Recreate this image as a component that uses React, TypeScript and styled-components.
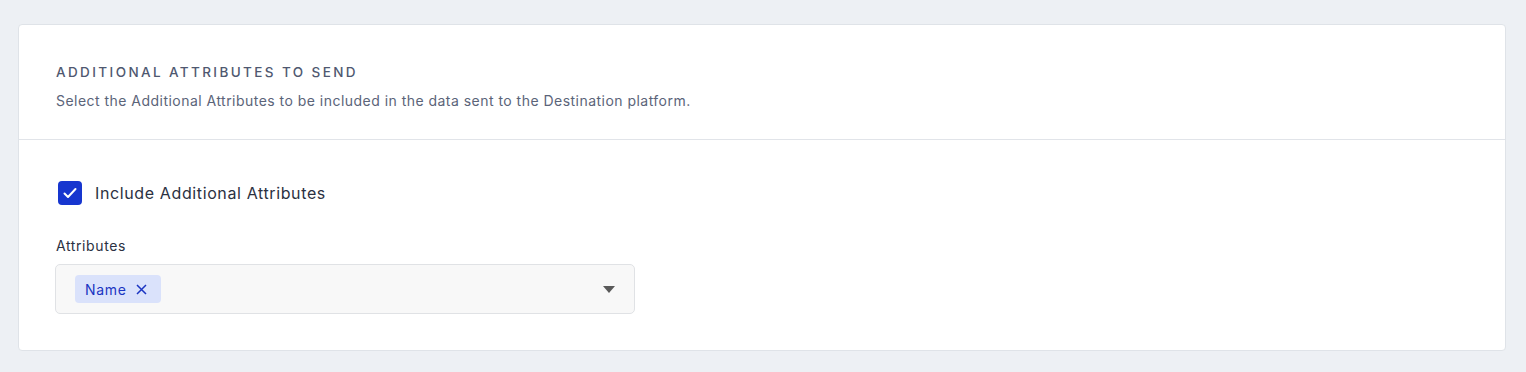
import React, { useState } from "react";
import styled, { createGlobalStyle } from "styled-components";

const GlobalStyle = createGlobalStyle`
  body {
    margin: 0;
    background: #edf0f4;
    font-family: Inter, "Noto Sans", sans-serif;
  }
`;

const Page = styled.div`
  padding: 24px 20px 21px 18px;
`;

const Card = styled.section`
  background: #ffffff;
  border: 1px solid #dfe3e8;
  border-radius: 4px;
`;

const Header = styled.div`
  padding: 37px 37px 28px;
  border-bottom: 1px solid #e1e4e9;
  display: flex;
  flex-direction: column;
  gap: 9px;
`;

const Title = styled.h3`
  margin: 0;
  font-size: 13.5px;
  line-height: 20px;
  font-weight: 500;
  letter-spacing: 2.4px;
  text-transform: uppercase;
  color: #4f5870;
`;

const Subtitle = styled.p`
  margin: 0;
  font-size: 14px;
  line-height: 20px;
  letter-spacing: 0.47px;
  color: #5b6479;
`;

const Body = styled.div`
  padding: 41px 37px 36px;
  display: flex;
  flex-direction: column;
`;

const CheckRow = styled.label`
  display: flex;
  align-items: center;
  gap: 13px;
  margin-left: 2px;
  cursor: pointer;
`;

const Box = styled.span<{ $checked: boolean }>`
  width: 24px;
  height: 24px;
  border-radius: 4px;
  background: ${(p) => (p.$checked ? "#1736cf" : "#fff")};
  border: ${(p) => (p.$checked ? "none" : "1px solid #9aa1ad")};
  display: flex;
  align-items: center;
  justify-content: center;
  box-sizing: border-box;
`;

const CheckText = styled.span`
  font-size: 16px;
  letter-spacing: 0.62px;
  color: #2b3142;
`;

const FieldLabel = styled.div`
  margin-top: 31px;
  margin-bottom: 8px;
  font-size: 14px;
  line-height: 20px;
  letter-spacing: 0.6px;
  color: #2b3142;
`;

const Select = styled.div`
  width: 580px;
  height: 50px;
  box-sizing: border-box;
  margin-left: -1px;
  border: 1px solid #e0e2e5;
  border-radius: 5px;
  background: #f8f8f8;
  display: flex;
  align-items: center;
  padding: 0 18px 0 19px;
`;

const Chips = styled.div`
  flex: 1;
  display: flex;
  gap: 6px;
`;

const Chip = styled.span`
  display: inline-flex;
  align-items: center;
  gap: 9px;
  height: 28px;
  padding: 0 14px 0 10px;
  border-radius: 4px;
  background: #dae2fb;
  color: #1b35c2;
  font-size: 14px;
  letter-spacing: 0.7px;
`;

const Remove = styled.button`
  border: none;
  background: none;
  padding: 0;
  display: flex;
  cursor: pointer;
`;

const Caret = styled.span`
  width: 0;
  height: 0;
  border-left: 6px solid transparent;
  border-right: 6px solid transparent;
  border-top: 7px solid #5a5a5a;
  margin-right: 1px;
`;

export default function App() {
  const [checked, setChecked] = useState(true);
  return (
    <Page>
      <GlobalStyle />
      <Card>
        <Header>
          <Title>Additional Attributes to Send</Title>
          <Subtitle>
            Select the Additional Attributes to be included in the data sent to the Destination platform.
          </Subtitle>
        </Header>
        <Body>
          <CheckRow onClick={() => setChecked(!checked)}>
            <Box $checked={checked}>
              {checked && (
                <svg width="16" height="16" viewBox="0 0 16 16" fill="none">
                  <path d="M2.5 8.5l3.5 3.5 7.5-8" stroke="#fff" strokeWidth="2" strokeLinecap="round" strokeLinejoin="round" />
                </svg>
              )}
            </Box>
            <CheckText>Include Additional Attributes</CheckText>
          </CheckRow>
          <FieldLabel>Attributes</FieldLabel>
          <Select>
            <Chips>
              <Chip>
                Name
                <Remove aria-label="Remove Name">
                  <svg width="11" height="11" viewBox="0 0 11 11">
                    <path d="M1 1l9 9M10 1l-9 9" stroke="#1b35c2" strokeWidth="1.5" />
                  </svg>
                </Remove>
              </Chip>
            </Chips>
            <Caret />
          </Select>
        </Body>
      </Card>
    </Page>
  );
}
